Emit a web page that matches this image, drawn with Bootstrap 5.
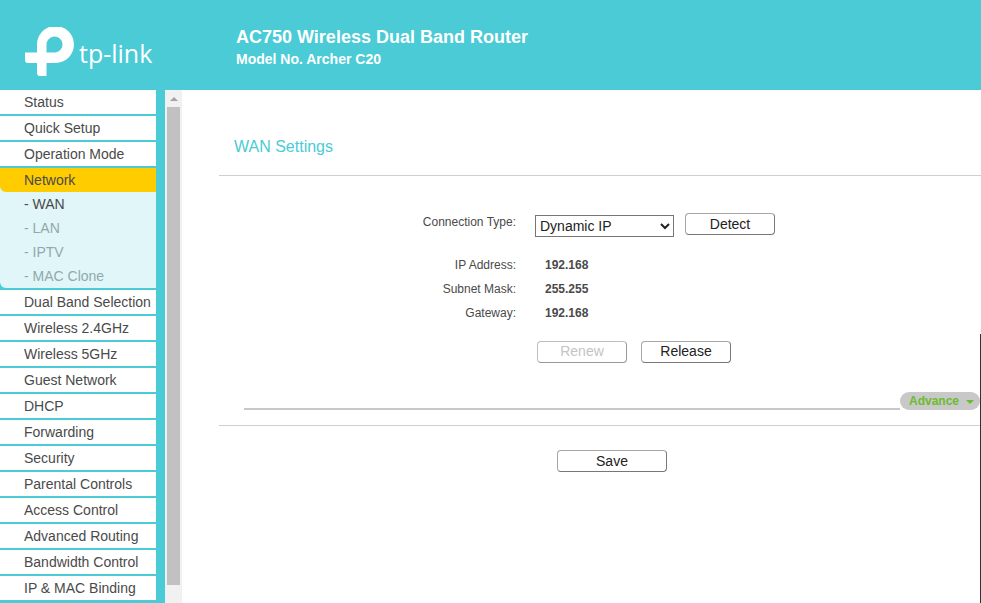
<!DOCTYPE html>
<html lang="en">
<head>
    <meta charset="UTF-8">
    <meta name="viewport" content="width=device-width, initial-scale=1.0">
    <title>WAN Settings</title>
    <link href="https://cdn.jsdelivr.net/npm/bootstrap@5.3.0/dist/css/bootstrap.min.css" rel="stylesheet">
    <style>
        html, body { height: 603px; overflow: hidden; }
        body { font-family: "Liberation Sans", Arial, sans-serif; color: #4a4a4a; background: #fff; position: relative; }
        .top-bar { height: 90px; background: #4acbd6; color: #fff; }
        .logo-box { width: 236px; padding-left: 25px; padding-top: 27px; height: 90px; }
        .logo-text { font-family: "Open Sans", sans-serif; font-size: 25px; font-weight: 400; line-height: 1; margin-left: 4px; margin-top: 14px; }
        .router-name { font-size: 18px; font-weight: 700; line-height: 21px; padding-top: 27px; }
        .router-model { font-size: 14px; font-weight: 700; line-height: 16px; padding-top: 3px; }
        .side-col { width: 165px; height: 513px; background: #4acbd6; padding-right: 9px; overflow: hidden; flex: none; }
        .menu-item { display: block; background: #fff; height: 24px; line-height: 24px; padding-left: 24px; font-size: 14px; color: #4a4a4a; text-decoration: none; margin-bottom: 2px; white-space: nowrap; }
        .menu-open { background: #e1f6f8; }
        .menu-open .menu-item { background: #ffcc00; margin-bottom: 0; border-bottom-left-radius: 6px; }
        .sub-wrap { background: #4acbd6; margin-bottom: 2px; }
        .sub-list { background: #e1f6f8; border-bottom-left-radius: 6px; }
        .sub-item { display: block; height: 24px; line-height: 24px; padding-left: 24px; font-size: 14px; color: #8fa9ad; text-decoration: none; }
        .sub-item.is-on { color: #4a4a4a; }
        .scroll-col { width: 17px; background: #f1f1f1; flex: none; height: 513px; padding: 0 2px; }
        .scroll-arrow { height: 17px; display: flex; align-items: center; justify-content: center; }
        .scroll-arrow span { border-left: 4px solid transparent; border-right: 4px solid transparent; border-bottom: 4px solid #a3a3a3; }
        .scroll-thumb { height: 478px; background: #c1c1c1; }
        .main-col { padding-left: 37px; min-width: 0; }
        .page-title { font-size: 16px; font-weight: 400; color: #4acbd6; margin: 0; padding: 47px 0 0 15px; height: 85px; line-height: 19px; }
        .rule { height: 1px; background: #cfcfcf; }
        .lbl { width: 297px; text-align: right; font-size: 12px; color: #4a4a4a; flex: none; }
        .type-row { margin-top: 37px; height: 24px; }
        .type-row .lbl { align-self: flex-start; line-height: 18px; }
        .type-select { width: 139px; height: 22px; margin-left: 19px; margin-top: 2px; font-family: "Liberation Sans", Arial, sans-serif; font-size: 14px; color: #222; background: #fff; border: 1px solid #767676; border-radius: 0; padding: 0; }
        .tp-btn { width: 90px; height: 22px; padding: 0; font-size: 14px; line-height: 20px; color: #222; background: #fff; border: 1px solid #a6a6a6; border-right-color: #777; border-bottom-color: #777; border-radius: 4px; }
        .tp-btn:disabled { color: #c4c4c4; background: #fff; border-color: #bdbdbd; border-right-color: #999; border-bottom-color: #999; opacity: 1; }
        .detect-btn { margin-left: 11px; }
        .info-row { height: 24px; line-height: 24px; }
        .info-val { margin-left: 29px; font-size: 12px; font-weight: 700; color: #4a4a4a; }
        .action-row { padding-left: 318px; gap: 14px; margin-top: 16px; }
        .action-row .tp-btn { line-height: 18px; padding-bottom: 2px; }
        .adv-row { margin-left: 25px; margin-right: 1px; height: 18px; margin-top: 29px; }
        .adv-line { height: 2px; background: #c8c8c8; }
        .adv-pill { width: 80px; height: 18px; line-height: 18px; background: #c8c8c8; border-radius: 9px; color: #6cbb2e; font-size: 12px; font-weight: 700; padding-left: 9px; flex: none; }
        .adv-caret { display: inline-block; margin-left: 7px; vertical-align: 1px; border-left: 4px solid transparent; border-right: 4px solid transparent; border-top: 4px solid #6cbb2e; }
        .save-rule { margin-top: 15px; }
        .save-row { padding-left: 338px; margin-top: 24px; }
        .save-row .tp-btn { width: 110px; }
        .edge-line { position: absolute; right: 0; top: 334px; bottom: 0; width: 1px; background: #333; }
    </style>
</head>
<body>
    <header class="top-bar d-flex">
        <div class="logo-box d-flex flex-none">
            <svg width="50" height="50" viewBox="25 27 50 50" fill="#fff" fill-rule="evenodd" aria-hidden="true">
                <path d="M25 52.500H37V45.500A18.500 18.500 0 1 1 55.500 63H46.500V76H40A3 3 0 0 1 37 73V63H28A3 3 0 0 1 25 60ZM46.500 52.500H55.500A8 8 0 1 0 46.500 44.500Z"/>
            </svg>
            <div class="logo-text">tp-link</div>
        </div>
        <div>
            <div class="router-name">AC750 Wireless Dual Band Router</div>
            <div class="router-model">Model No. Archer C20</div>
        </div>
    </header>

    <div class="d-flex">
        <nav class="side-col">
            <a class="menu-item" href="#">Status</a>
            <a class="menu-item" href="#">Quick Setup</a>
            <a class="menu-item" href="#">Operation Mode</a>
            <div class="menu-open">
                <a class="menu-item" href="#">Network</a>
            </div>
            <div class="sub-wrap">
                <div class="sub-list">
                    <a class="sub-item is-on" href="#">- WAN</a>
                    <a class="sub-item" href="#">- LAN</a>
                    <a class="sub-item" href="#">- IPTV</a>
                    <a class="sub-item" href="#">- MAC Clone</a>
                </div>
            </div>
            <a class="menu-item" href="#">Dual Band Selection</a>
            <a class="menu-item" href="#">Wireless 2.4GHz</a>
            <a class="menu-item" href="#">Wireless 5GHz</a>
            <a class="menu-item" href="#">Guest Network</a>
            <a class="menu-item" href="#">DHCP</a>
            <a class="menu-item" href="#">Forwarding</a>
            <a class="menu-item" href="#">Security</a>
            <a class="menu-item" href="#">Parental Controls</a>
            <a class="menu-item" href="#">Access Control</a>
            <a class="menu-item" href="#">Advanced Routing</a>
            <a class="menu-item" href="#">Bandwidth Control</a>
            <a class="menu-item" href="#">IP &amp; MAC Binding</a>
        </nav>
        <div class="scroll-col">
            <div class="scroll-arrow"><span></span></div>
            <div class="scroll-thumb"></div>
        </div>

        <main class="main-col flex-grow-1">
            <h1 class="page-title">WAN Settings</h1>
            <div class="rule"></div>

            <div class="type-row d-flex">
                <div class="lbl">Connection Type:</div>
                <select class="type-select">
                    <option>Dynamic IP</option>
                </select>
                <button class="tp-btn detect-btn" type="button">Detect</button>
            </div>

            <div class="mt-3">
                <div class="info-row d-flex"><div class="lbl">IP Address:</div><div class="info-val">192.168</div></div>
                <div class="info-row d-flex"><div class="lbl">Subnet Mask:</div><div class="info-val">255.255</div></div>
                <div class="info-row d-flex"><div class="lbl">Gateway:</div><div class="info-val">192.168</div></div>
            </div>

            <div class="action-row d-flex">
                <button class="tp-btn" type="button" disabled>Renew</button>
                <button class="tp-btn" type="button">Release</button>
            </div>

            <div class="adv-row d-flex align-items-end">
                <div class="adv-line flex-grow-1"></div>
                <div class="adv-pill">Advance<span class="adv-caret"></span></div>
            </div>
            <div class="rule save-rule"></div>

            <div class="save-row d-flex">
                <button class="tp-btn" type="button">Save</button>
            </div>
        </main>
    </div>
    <div class="edge-line"></div>
    <script src="https://cdn.jsdelivr.net/npm/bootstrap@5.3.0/dist/js/bootstrap.bundle.min.js"></script>
</body>
</html>
